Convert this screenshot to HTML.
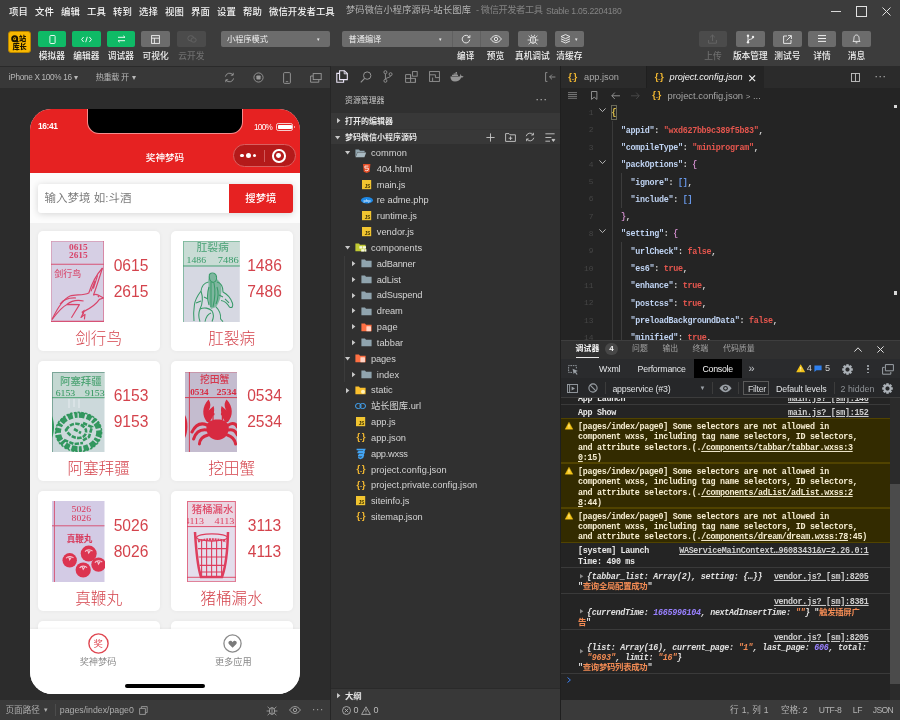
<!DOCTYPE html><html><head><meta charset="utf-8"><title>微信开发者工具</title><style>
*{box-sizing:border-box;margin:0;padding:0}
html,body{width:900px;height:720px;overflow:hidden;background:#2d2d2d}
body{font-family:"Liberation Sans","Noto Sans CJK SC",sans-serif;color:#ddd;position:relative;font-size:9.4px;line-height:1}
.a{position:absolute;white-space:nowrap}
.t{position:absolute;white-space:nowrap;transform:translateY(-50%);line-height:1.2}
.tc{position:absolute;white-space:nowrap;transform:translate(-50%,-50%);line-height:1.2}
.tr{position:absolute;white-space:nowrap;transform:translate(-100%,-50%);line-height:1.2}
.mono{font-family:"Liberation Mono","Noto Sans CJK SC",monospace}
svg{position:absolute;overflow:visible}
</style></head><body><div class="a" style="left:0;top:0;width:900px;height:720px;will-change:transform">
<div class="a" style="left:0px;top:0px;width:900px;height:66px;background:#3c3c3c;"></div>
<div class="t" style="left:9px;top:11.5px;font-size:9.4px;color:#f2f2f2;font-weight:500">项目</div>
<div class="t" style="left:35px;top:11.5px;font-size:9.4px;color:#f2f2f2;font-weight:500">文件</div>
<div class="t" style="left:61px;top:11.5px;font-size:9.4px;color:#f2f2f2;font-weight:500">编辑</div>
<div class="t" style="left:87px;top:11.5px;font-size:9.4px;color:#f2f2f2;font-weight:500">工具</div>
<div class="t" style="left:113px;top:11.5px;font-size:9.4px;color:#f2f2f2;font-weight:500">转到</div>
<div class="t" style="left:139px;top:11.5px;font-size:9.4px;color:#f2f2f2;font-weight:500">选择</div>
<div class="t" style="left:165px;top:11.5px;font-size:9.4px;color:#f2f2f2;font-weight:500">视图</div>
<div class="t" style="left:191px;top:11.5px;font-size:9.4px;color:#f2f2f2;font-weight:500">界面</div>
<div class="t" style="left:217px;top:11.5px;font-size:9.4px;color:#f2f2f2;font-weight:500">设置</div>
<div class="t" style="left:243px;top:11.5px;font-size:9.4px;color:#f2f2f2;font-weight:500">帮助</div>
<div class="t" style="left:269px;top:11.5px;font-size:9.4px;color:#f2f2f2;font-weight:500">微信开发者工具</div>
<div class="t" style="left:346px;top:11px;color:#b4b4b4;font-size:9.2px;letter-spacing:0.179px;">梦码微信小程序源码-站长图库</div>
<div class="t" style="left:476px;top:11px;color:#858585;font-size:9.2px;letter-spacing:-0.382px;">- 微信开发者工具</div>
<div class="t" style="left:546px;top:11px;color:#858585;font-size:8.6px;letter-spacing:-0.201px;">Stable 1.05.2204180</div>
<div class="a" style="left:830.5px;top:10.5px;width:10px;height:1px;background:#d8d8d8;"></div>
<div class="a" style="left:855.5px;top:5.5px;width:11px;height:11px;background:transparent;border:1px solid #e0e0e0"></div>
<svg style="left:882px;top:6.5px" width="9" height="9" viewBox="0 0 9 9"><path d="M0.5 0.5L8.5 8.5M8.5 0.5L0.5 8.5" stroke="#e0e0e0" stroke-width="1" fill="none"/></svg>
<div class="a" style="left:8.4px;top:30.6px;width:22.2px;height:22.2px;background:#f8b800;border-radius:3px;border:0.8px solid #b98600"></div>
<svg style="left:10.8px;top:35px" width="8" height="8" viewBox="0 0 8 8"><circle cx="3.7" cy="3.7" r="2.5" fill="none" stroke="#1a1400" stroke-width="2"/><circle cx="3.7" cy="3.7" r="0.7" fill="#1a1400"/><path d="M5.4 5.4L7.4 7.2" stroke="#1a1400" stroke-width="1.6"/></svg>
<div class="tc" style="left:22.6px;top:38.9px;font-size:7.2px;font-weight:900;color:#1a1400">站</div>
<div class="tc" style="left:19.6px;top:46.6px;font-size:7.2px;font-weight:900;color:#1a1400;letter-spacing:-0.2px">库长</div>
<div class="a" style="left:37.5px;top:31px;width:28.7px;height:15.7px;background:#0fba66;border-radius:2px"></div>
<svg style="left:48.5px;top:34.5px" width="7" height="9" viewBox="0 0 7 9"><rect x="0.9" y="0.5" width="5.2" height="8" rx="0.8" fill="none" stroke="#fff" stroke-width="0.9"/></svg>
<div class="tc" style="left:51.85px;top:56.3px;font-size:8.7px;color:#f0f0f0;font-weight:500">模拟器</div>
<div class="a" style="left:72px;top:31px;width:28.7px;height:15.7px;background:#0fba66;border-radius:2px"></div>
<svg style="left:81px;top:35.5px" width="11" height="7" viewBox="0 0 11 7"><path d="M2.6 1L0.6 3.5L2.6 6M8.4 1L10.4 3.5L8.4 6M6.3 0.8L4.7 6.2" fill="none" stroke="#fff" stroke-width="0.9"/></svg>
<div class="tc" style="left:86.35px;top:56.3px;font-size:8.7px;color:#f0f0f0;font-weight:500">编辑器</div>
<div class="a" style="left:106.5px;top:31px;width:28.7px;height:15.7px;background:#0fba66;border-radius:2px"></div>
<svg style="left:116.5px;top:35px" width="9" height="8" viewBox="0 0 9 8"><path d="M1 2.3H8M6.3 0.8L8 2.3M8 5.7H1M2.7 7.2L1 5.7" fill="none" stroke="#fff" stroke-width="0.9"/></svg>
<div class="tc" style="left:120.85px;top:56.3px;font-size:8.7px;color:#f0f0f0;font-weight:500">调试器</div>
<div class="a" style="left:141.3px;top:31px;width:28.7px;height:15.7px;background:#6c6c6c;border-radius:2px"></div>
<svg style="left:151px;top:34.5px" width="9" height="9" viewBox="0 0 9 9"><rect x="0.6" y="0.6" width="7.8" height="7.8" fill="none" stroke="#f0f0f0" stroke-width="0.9"/><path d="M0.6 3.2H8.4M3.4 3.2V8.4" stroke="#f0f0f0" stroke-width="0.9" fill="none"/></svg>
<div class="tc" style="left:155.65px;top:56.3px;font-size:8.7px;color:#f0f0f0;font-weight:500">可视化</div>
<div class="a" style="left:177px;top:31px;width:28.7px;height:15.7px;background:#4b4b4b;border-radius:2px"></div>
<svg style="left:186.5px;top:35px" width="10" height="8" viewBox="0 0 10 8"><ellipse cx="3.8" cy="3.3" rx="3" ry="2.6" fill="none" stroke="#636363" stroke-width="0.9"/><ellipse cx="6.6" cy="5" rx="2.6" ry="2.2" fill="#4b4b4b" stroke="#636363" stroke-width="0.9"/></svg>
<div class="tc" style="left:191.35px;top:56.3px;font-size:8.7px;color:#6e6e6e;font-weight:500">云开发</div>
<div class="a" style="left:220.5px;top:31px;width:109px;height:15.7px;background:#6c6c6c;border-radius:2px"></div>
<div class="t" style="left:227px;top:39.8px;font-size:8.2px;color:#f0f0f0">小程序模式</div>
<div class="tc" style="left:318px;top:39px;font-size:5.4px;color:#e8e8e8">▾</div>
<div class="a" style="left:342px;top:31px;width:166.7px;height:15.7px;background:#6c6c6c;border-radius:2px"></div>
<div class="t" style="left:348.5px;top:39.8px;font-size:8.2px;color:#f0f0f0">普通编译</div>
<div class="tc" style="left:440.5px;top:39px;font-size:5.4px;color:#e8e8e8">▾</div>
<div class="a" style="left:452.3px;top:31px;width:0.8px;height:15.7px;background:#606060;"></div>
<div class="a" style="left:480.3px;top:31px;width:0.8px;height:15.7px;background:#606060;"></div>
<svg style="left:460.7px;top:33.8px" width="10" height="10" viewBox="0 0 10 10"><path d="M8.3 3.2A3.8 3.8 0 1 0 8.8 5.6" fill="none" stroke="#f0f0f0" stroke-width="0.9"/><path d="M8.9 1.2V3.6H6.5" fill="none" stroke="#f0f0f0" stroke-width="0.9"/></svg>
<svg style="left:489.5px;top:35px" width="12" height="8" viewBox="0 0 12 8"><path d="M0.6 4C2.4 1.4 4.2 0.6 6 0.6S9.6 1.4 11.4 4C9.6 6.6 7.8 7.4 6 7.4S2.4 6.6 0.6 4Z" fill="none" stroke="#f0f0f0" stroke-width="0.9"/><circle cx="6" cy="4" r="1.7" fill="none" stroke="#f0f0f0" stroke-width="0.9"/></svg>
<div class="tc" style="left:465.7px;top:56.3px;font-size:8.7px;color:#f0f0f0;font-weight:500">编译</div>
<div class="tc" style="left:495.5px;top:56.3px;font-size:8.7px;color:#f0f0f0;font-weight:500">预览</div>
<div class="a" style="left:518px;top:31px;width:28.7px;height:15.7px;background:#6c6c6c;border-radius:2px"></div>
<svg style="left:526.5px;top:33.6px" width="12" height="11" viewBox="0 0 12 11"><ellipse cx="6" cy="6" rx="2.6" ry="3.4" fill="none" stroke="#f0f0f0" stroke-width="0.9"/><path d="M6 2.6V9.4M3.4 6H0.6M8.6 6H11.4M3.8 3.8L1.6 1.8M8.2 3.8L10.4 1.8M3.8 8.2L1.6 10.2M8.2 8.2L10.4 10.2M4.4 2.2L4.4 0.8M7.6 2.2V0.8" stroke="#f0f0f0" stroke-width="0.8" fill="none"/></svg>
<div class="tc" style="left:532.35px;top:56.3px;font-size:8.7px;color:#f0f0f0;font-weight:500">真机调试</div>
<div class="a" style="left:555px;top:31px;width:28.7px;height:15.7px;background:#6c6c6c;border-radius:2px"></div>
<svg style="left:560px;top:34px" width="11" height="10" viewBox="0 0 11 10"><path d="M5.5 0.6L10 2.6L5.5 4.6L1 2.6Z M1 4.8L5.5 6.8L10 4.8M1 7L5.5 9L10 7" fill="none" stroke="#f0f0f0" stroke-width="0.9"/></svg>
<div class="tc" style="left:569.35px;top:56.3px;font-size:8.7px;color:#f0f0f0;font-weight:500">清缓存</div>
<div class="tc" style="left:576.5px;top:39px;font-size:5.4px;color:#e8e8e8">▾</div>
<div class="a" style="left:698.6px;top:31px;width:28.6px;height:15.7px;background:#4b4b4b;border-radius:2px"></div>
<svg style="left:708.4px;top:34px" width="9" height="10" viewBox="0 0 9 10"><path d="M4.5 7V1M2.2 3.2L4.5 1L6.8 3.2M0.6 6V9.2H8.4V6" fill="none" stroke="#666" stroke-width="0.9"/></svg>
<div class="tc" style="left:712.9px;top:56.3px;font-size:8.7px;color:#6e6e6e;font-weight:500">上传</div>
<div class="a" style="left:736px;top:31px;width:28.6px;height:15.7px;background:#6c6c6c;border-radius:2px"></div>
<svg style="left:746px;top:34px" width="9" height="10" viewBox="0 0 9 10"><circle cx="2" cy="1.8" r="1.2" fill="#f0f0f0"/><circle cx="2" cy="8.2" r="1.2" fill="#f0f0f0"/><circle cx="7" cy="3" r="1.2" fill="#f0f0f0"/><path d="M2 2V8M7 3.4C7 5.6 2 5 2 7" fill="none" stroke="#f0f0f0" stroke-width="0.9"/></svg>
<div class="tc" style="left:750.3px;top:56.3px;font-size:8.7px;color:#f0f0f0;font-weight:500">版本管理</div>
<div class="a" style="left:773px;top:31px;width:28.8px;height:15.7px;background:#6c6c6c;border-radius:2px"></div>
<svg style="left:783px;top:34.5px" width="9" height="9" viewBox="0 0 9 9"><path d="M4 1H0.6V8.4H8V5M5 0.6H8.4V4M8.2 0.8L3.6 5.4" fill="none" stroke="#f0f0f0" stroke-width="0.9"/></svg>
<div class="tc" style="left:787.4px;top:56.3px;font-size:8.7px;color:#f0f0f0;font-weight:500">测试号</div>
<div class="a" style="left:807.8px;top:31px;width:28.4px;height:15.7px;background:#6c6c6c;border-radius:2px"></div>
<svg style="left:818px;top:35.3px" width="8" height="7" viewBox="0 0 8 7"><path d="M0 0.6H8M0 3.5H8M0 6.4H8" stroke="#f0f0f0" stroke-width="1" fill="none"/></svg>
<div class="tc" style="left:822.0px;top:56.3px;font-size:8.7px;color:#f0f0f0;font-weight:500">详情</div>
<div class="a" style="left:842px;top:31px;width:28.8px;height:15.7px;background:#6c6c6c;border-radius:2px"></div>
<svg style="left:852px;top:34px" width="9" height="10" viewBox="0 0 9 10"><path d="M1 7.4C2 6.4 1.8 5 2 3.6C2.2 2 3.2 1 4.5 1S6.8 2 7 3.6C7.2 5 7 6.4 8 7.4Z M3.6 8.8H5.4" fill="none" stroke="#f0f0f0" stroke-width="0.9"/></svg>
<div class="tc" style="left:856.4px;top:56.3px;font-size:8.7px;color:#f0f0f0;font-weight:500">消息</div>
<div class="a" style="left:0px;top:66px;width:330px;height:22px;background:#383838;border-top:1px solid #2a2a2a"></div>
<div class="t" style="left:8.75px;top:78.2px;color:#b8b8b8;font-size:8.2px;letter-spacing:-0.302px;">iPhone X 100% 16</div>
<div class="tc" style="left:75.5px;top:78px;font-size:8px;color:#b8b8b8">▾</div>
<div class="t" style="left:95.75px;top:78.2px;color:#b8b8b8;font-size:8.2px;letter-spacing:-0.406px;">热重载 开</div>
<div class="tc" style="left:133.75px;top:78px;font-size:8px;color:#b8b8b8">▾</div>
<svg style="left:223.5px;top:72px" width="11" height="11" viewBox="0 0 11 11"><path d="M1.4 4.6A4.2 4.2 0 0 1 9 3M9.6 6.4A4.2 4.2 0 0 1 2 8" fill="none" stroke="#9a9a9a" stroke-width="0.9"/><path d="M9.2 0.8V3.2H6.8M1.8 10.2V7.8H4.2" fill="none" stroke="#9a9a9a" stroke-width="0.9"/></svg>
<svg style="left:252.5px;top:72px" width="11" height="11" viewBox="0 0 11 11"><circle cx="5.5" cy="5.5" r="4.6" fill="none" stroke="#9a9a9a" stroke-width="0.9"/><rect x="3.4" y="3.4" width="4.2" height="4.2" rx="0.8" fill="#9a9a9a"/></svg>
<svg style="left:283px;top:71.5px" width="8" height="12" viewBox="0 0 8 12"><rect x="0.6" y="0.6" width="6.8" height="10.8" rx="1" fill="none" stroke="#9a9a9a" stroke-width="0.9"/><path d="M2.8 9.6H5.2" stroke="#9a9a9a" stroke-width="0.8"/></svg>
<svg style="left:310px;top:72.5px" width="12" height="10" viewBox="0 0 12 10"><rect x="3.2" y="0.6" width="8" height="6" fill="none" stroke="#9a9a9a" stroke-width="0.9"/><path d="M3 3H0.6V9.2H8.8V6.8" fill="none" stroke="#9a9a9a" stroke-width="0.9"/></svg>
<div class="a" style="left:0px;top:88px;width:330px;height:612px;background:#2c2c2c;"></div>
<div class="a" style="left:30px;top:108.5px;width:270px;height:585.5px;background:#f1f1f1;border-radius:21px 21px 22px 22px;overflow:hidden">
<div class="a" style="left:0px;top:0.0px;width:270px;height:64.5px;background:#e62222;"></div>
<div class="a" style="left:58px;top:-8.5px;width:153.5px;height:33px;background:#000;border-radius:0 0 11px 11px;box-shadow:0 0 0 1px rgba(255,205,205,.62)"></div>
<div class="t" style="left:8px;top:17.1px;font-weight:700;color:#fff;font-size:8.4px;letter-spacing:-0.404px;">16:41</div>
<div class="t" style="left:224px;top:19.0px;color:#fff;font-size:8.2px;letter-spacing:-0.738px;">100%</div>
<div class="a" style="left:246px;top:14.7px;width:17.4px;height:7.6px;background:transparent;border:1px solid #f5cdcd;border-radius:2.2px"></div>
<div class="a" style="left:247.7px;top:16.4px;width:14px;height:4.2px;background:#fff;border-radius:0.8px"></div>
<div class="a" style="left:263.8px;top:17.1px;width:1.3px;height:2.8px;background:#f5cdcd;border-radius:0 1px 1px 0"></div>
<div class="tc" style="left:135px;top:49.7px;font-size:9.6px;color:#fff;font-weight:500">奖神梦码</div>
<div class="a" style="left:203px;top:35.9px;width:62.5px;height:22.8px;background:#b41a1a;border-radius:11.4px;border:0.8px solid #d96060"></div>
<div class="a" style="left:234px;top:41.1px;width:0.7px;height:12.4px;background:#d05a5a;"></div>
<div class="a" style="left:210.45px;top:45.75px;width:3.1px;height:3.1px;background:#fff;border-radius:50%"></div>
<div class="a" style="left:215.9px;top:44.8px;width:5.0px;height:5.0px;background:#fff;border-radius:50%"></div>
<div class="a" style="left:223.25px;top:45.75px;width:3.1px;height:3.1px;background:#fff;border-radius:50%"></div>
<div class="a" style="left:242px;top:40.5px;width:13.6px;height:13.6px;background:transparent;border:2px solid #fff;border-radius:50%"></div>
<div class="a" style="left:246.4px;top:44.9px;width:4.8px;height:4.8px;background:#fff;border-radius:50%"></div>
<div class="a" style="left:0px;top:64.5px;width:270px;height:50.4px;background:#fcfcfc;"></div>
<div class="a" style="left:8px;top:75.5px;width:255px;height:28.5px;background:#fff;border-radius:3px;box-shadow:0 1px 7px rgba(0,0,0,.16)"></div>
<div class="a" style="left:198.6px;top:75.5px;width:64.4px;height:28.5px;background:#e62222;border-radius:0 3px 3px 0"></div>
<div class="t" style="left:14.6px;top:90.5px;font-size:11.5px;color:#7d7d7d">输入梦境 如:斗酒</div>
<div class="tc" style="left:230.8px;top:90.5px;font-size:10.3px;color:#fff;font-weight:500">搜梦境</div>
<div class="a" style="left:7.6px;top:122.5px;width:122.6px;height:120px;background:#fff;border-radius:5px;box-shadow:0 0 4px rgba(0,0,0,.05)"></div>
<svg style="left:20.7px;top:132.5px;overflow:hidden" width="53.8" height="81.4" viewBox="0 0 53.8 81.4"><rect width="53.8" height="81.4" fill="#d6cfe4"/><path d="M0 23.2H53.8M53 0V81.4M0 80.4H53.8" stroke="#d8456a" stroke-width="1.1" opacity=".9"/><path d="M0.4 0V81.4M0 0.4H53.8" stroke="#d8456a" stroke-width="0.7" opacity=".45"/><text x="18" y="8.9" font-size="7.6" font-weight="700" fill="#d8456a" text-anchor="start" style="font-family:&quot;Liberation Serif&quot;,&quot;Noto Serif CJK SC&quot;,serif" textLength="18.7" lengthAdjust="spacingAndGlyphs">0615</text><text x="18" y="16.6" font-size="7.6" font-weight="700" fill="#d8456a" text-anchor="start" style="font-family:&quot;Liberation Serif&quot;,&quot;Noto Serif CJK SC&quot;,serif" textLength="18.7" lengthAdjust="spacingAndGlyphs">2615</text><text x="3.2" y="35.6" font-size="9" font-weight="500" fill="#d8456a" text-anchor="start" style="font-family:&quot;Liberation Sans&quot;,&quot;Noto Sans CJK SC&quot;,sans-serif" opacity=".9">剑行鸟</text><g fill="none" stroke="#d8456a" stroke-width="1.15" stroke-linejoin="round"><path d="M51.5 27C46 33 41 42 37.8 52C32 55 24 53 19 55C12 58 6 68 1 78.5"/><path d="M51.5 27C48.5 36 45.5 46 42.5 54C44.5 52.6 47 53.6 49 55L52.5 57L48.4 58.4C46 62 40 67 33 70.4L30 76.5L34 73.4L33.4 78.4"/><path d="M1 78.5C6 72 10 66.4 16 63.4L28.4 63.6L20.4 76.8"/><path d="M16 63.4C20 60 26 58.6 32.6 60M46.6 34.4L42.4 47.6M44 40L40 50.4M9 63C13 58 19 56.6 25 57"/></g><circle cx="47.4" cy="55.6" r="0.8" fill="#d8456a"/><path d="M30.4 71L33.6 68.6L32.6 74Z" fill="#d8456a"/></svg>
<div class="tc" style="left:101px;top:157.8px;font-size:15.6px;color:#d4434c">0615</div>
<div class="tc" style="left:101px;top:183.5px;font-size:15.6px;color:#d4434c">2615</div>
<div class="tc" style="left:68.6px;top:230.4px;font-size:15.6px;color:#d4434c;font-weight:300">剑行鸟</div>
<div class="a" style="left:140.6px;top:122.5px;width:122.6px;height:120px;background:#fff;border-radius:5px;box-shadow:0 0 4px rgba(0,0,0,.05)"></div>
<svg style="left:153px;top:132.5px;overflow:hidden" width="56.8" height="81.2" viewBox="0 0 56.8 81.2"><rect width="56.8" height="81.2" fill="#d6d8e2"/><rect width="56.8" height="25" fill="#c9dcd5"/><path d="M0 25H56.8" stroke="#379a68" stroke-width="1.1" opacity=".9"/><path d="M0.5 0V81.2M0 0.4H56.8" stroke="#379a68" stroke-width="0.9" opacity=".55"/><text x="29.6" y="10.2" font-size="10.8" font-weight="500" fill="#379a68" text-anchor="middle" style="font-family:&quot;Liberation Sans&quot;,&quot;Noto Sans CJK SC&quot;,sans-serif" opacity=".72">肛裂病</text><text x="3.6" y="22" font-size="8.4" font-weight="400" fill="#379a68" text-anchor="start" style="font-family:&quot;Liberation Serif&quot;,&quot;Noto Serif CJK SC&quot;,serif" textLength="19.5" lengthAdjust="spacingAndGlyphs">1486</text><text x="34.8" y="22" font-size="8.4" font-weight="400" fill="#379a68" text-anchor="start" style="font-family:&quot;Liberation Serif&quot;,&quot;Noto Serif CJK SC&quot;,serif" textLength="21" lengthAdjust="spacingAndGlyphs">7486</text><path d="M27 33C31 31.6 34 34 33.6 38C37 40 38.6 44 38.4 50C38 57 36 62 33 66L28 68C25 62 24.6 52 25.6 44C25 40 25 36 27 33Z" fill="#379a68" opacity=".55"/><g fill="none" stroke="#379a68" stroke-width="1.05" stroke-linejoin="round"><path d="M26.4 33.4C29 31 33.4 32 33.6 36.4C33.8 39 32 41 30 41.4C27.4 41 25.6 38 26.4 33.4Z"/><path d="M25.4 41C21 42 18.6 45 18 50C15 54 12 58 11.4 64C10.4 70 10.6 76 11 80M18 50C20 56 20 62 17 68C15.4 72 15.6 77 17 80.6"/><path d="M34 41C38 42 40 46 40 51C44 53 47.6 57 49.4 62C50.6 65.6 49 67.6 46.4 66C44 62 41 60 38 59.6"/><path d="M17 68C21 66 26 67 29 70C31 73 30.6 77 29 80.6M33 66C36 69 38 73 37.6 78L40 80.6M22 80.6C23 76 25 73 28 72"/><path d="M28 41V66M31 42C32.6 50 32 58 30 66M26 46C24 52 24 58 26 64M34 46C36 52 35 58 33 63M21 56L25 58M36 54L40 56M13 62L18 60M42 58L46 62"/></g></svg>
<div class="tc" style="left:234.5px;top:157.8px;font-size:15.6px;color:#d4434c">1486</div>
<div class="tc" style="left:234.5px;top:183.5px;font-size:15.6px;color:#d4434c">7486</div>
<div class="tc" style="left:201.6px;top:230.4px;font-size:15.6px;color:#d4434c;font-weight:300">肛裂病</div>
<div class="a" style="left:7.6px;top:252.5px;width:122.6px;height:120px;background:#fff;border-radius:5px;box-shadow:0 0 4px rgba(0,0,0,.05)"></div>
<svg style="left:22.3px;top:263.2px;overflow:hidden" width="52.5" height="80" viewBox="0 0 52.5 80"><rect width="52.5" height="80" fill="#ccd9db"/><rect width="52.5" height="25.6" fill="#c4d8d2"/><path d="M0 0.5H52.5M0.5 0V80" stroke="#6a9a8a" stroke-width="1" opacity=".8"/><path d="M0 25.7H52.5" stroke="#2a9458" stroke-width="1" opacity=".8"/><path d="M17 27V36M22 27V35M27 27V36" stroke="#dfe6ea" stroke-width="2" opacity=".7"/><text x="28.8" y="12.8" font-size="10.4" font-weight="500" fill="#2a9458" text-anchor="middle" style="font-family:&quot;Liberation Sans&quot;,&quot;Noto Sans CJK SC&quot;,sans-serif" opacity=".75">阿塞拜疆</text><text x="3.7" y="23.5" font-size="8.4" font-weight="400" fill="#2a9458" text-anchor="start" style="font-family:&quot;Liberation Serif&quot;,&quot;Noto Serif CJK SC&quot;,serif" textLength="19.5" lengthAdjust="spacingAndGlyphs">6153</text><text x="33" y="23.5" font-size="8.4" font-weight="400" fill="#2a9458" text-anchor="start" style="font-family:&quot;Liberation Serif&quot;,&quot;Noto Serif CJK SC&quot;,serif" textLength="19.5" lengthAdjust="spacingAndGlyphs">9153</text><ellipse cx="26.6" cy="60" rx="20.4" ry="17" fill="none" stroke="#2a9458" stroke-width="5.6" stroke-dasharray="5 1.8 3 1.4 6 2" opacity=".95"/><ellipse cx="26.6" cy="60" rx="23" ry="19.6" fill="none" stroke="#2a9458" stroke-width="1.6" stroke-dasharray="2.4 1.4" opacity=".9"/><path d="M14 58C19 50 28 50 33 56C36 60 33 66 27 66C21 66 17 63 14 58ZM22 57L29 61M31 51L40 55L37 65L30 69M12 68L22 72L31 71" fill="none" stroke="#2a9458" stroke-width="2.6" stroke-dasharray="4.4 1.3" opacity=".95"/><path d="M0 44C2.6 50 2.6 60 0 66Z" fill="#2a9458"/></svg>
<div class="tc" style="left:101px;top:287.8px;font-size:15.6px;color:#d4434c">6153</div>
<div class="tc" style="left:101px;top:313.5px;font-size:15.6px;color:#d4434c">9153</div>
<div class="tc" style="left:68.6px;top:360.4px;font-size:15.6px;color:#d4434c;font-weight:300">阿塞拜疆</div>
<div class="a" style="left:140.6px;top:252.5px;width:122.6px;height:120px;background:#fff;border-radius:5px;box-shadow:0 0 4px rgba(0,0,0,.05)"></div>
<svg style="left:155.1px;top:263.2px;overflow:hidden" width="52.3" height="80" viewBox="0 0 52.3 80"><rect width="52.3" height="80" fill="#c4bccf"/><path d="M0 25.6H52.3M4.4 0V80" stroke="#d72a40" stroke-width="1" opacity=".85"/><path d="M0 0.4H52.3" stroke="#d72a40" stroke-width="0.7" opacity=".4"/><text x="29.6" y="10.6" font-size="9.8" font-weight="500" fill="#d72a40" text-anchor="middle" style="font-family:&quot;Liberation Sans&quot;,&quot;Noto Sans CJK SC&quot;,sans-serif" opacity=".9">挖田蟹</text><text x="5.3" y="22.6" font-size="8.2" font-weight="700" fill="#d72a40" text-anchor="start" style="font-family:&quot;Liberation Serif&quot;,&quot;Noto Serif CJK SC&quot;,serif" textLength="18.3" lengthAdjust="spacingAndGlyphs">0534</text><text x="31.5" y="22.6" font-size="8.2" font-weight="700" fill="#d72a40" text-anchor="start" style="font-family:&quot;Liberation Serif&quot;,&quot;Noto Serif CJK SC&quot;,serif" textLength="20" lengthAdjust="spacingAndGlyphs">2534</text><path d="M21.4 56C21 50 26 47.4 32.6 47.4C39 47.4 44 50 43.8 56C43.6 63 39 68 32.6 68C26 68 21.6 63 21.4 56Z" fill="#d72a40"/><path d="M22 50C17 44 16.6 35 23.6 27.6C26 31 26 35 23.6 38.6L28.6 34C30.6 40 27 47 24.6 50Z M43 50C48 44 48.6 35 41.6 27.6C39 31 39 35 41.6 38.6L36.6 34C34.6 40 38 47 40.4 50Z" fill="#d72a40"/><path d="M22 53C15 50 10 54 7 60M21.6 58C14 57 10.4 61.6 8.6 67M23 63C17 64.6 14.6 68 14.4 72M43.4 53C48 50 51 52 52.3 55M43.6 58C48 57 51 60 52.3 63M42.4 63C47 64.6 50 68 50.6 72" fill="none" stroke="#d72a40" stroke-width="3" stroke-linecap="round"/><path d="M28 48.4V42.6M37.4 48.4V42.6" stroke="#d72a40" stroke-width="1.3"/><circle cx="28" cy="42" r="1.6" fill="#d72a40"/><circle cx="37.4" cy="42" r="1.6" fill="#d72a40"/><path d="M0 43C3.2 48 3.2 60 0 66Z" fill="#d72a40"/></svg>
<div class="tc" style="left:234.5px;top:287.8px;font-size:15.6px;color:#d4434c">0534</div>
<div class="tc" style="left:234.5px;top:313.5px;font-size:15.6px;color:#d4434c">2534</div>
<div class="tc" style="left:201.6px;top:360.4px;font-size:15.6px;color:#d4434c;font-weight:300">挖田蟹</div>
<div class="a" style="left:7.6px;top:382.5px;width:122.6px;height:120px;background:#fff;border-radius:5px;box-shadow:0 0 4px rgba(0,0,0,.05)"></div>
<svg style="left:22.3px;top:392.5px;overflow:hidden" width="52.5" height="81.3" viewBox="0 0 52.5 81.3"><rect width="52.5" height="81.3" fill="#d3cbe5"/><path d="M0 24.8H52.5M2.4 0V81.3" stroke="#d8385a" stroke-width="1" opacity=".8"/><text x="19.6" y="11" font-size="7.8" font-weight="500" fill="#d8385a" text-anchor="start" style="font-family:&quot;Liberation Serif&quot;,&quot;Noto Serif CJK SC&quot;,serif" textLength="19.4" lengthAdjust="spacingAndGlyphs">5026</text><text x="19.6" y="19.6" font-size="7.8" font-weight="500" fill="#d8385a" text-anchor="start" style="font-family:&quot;Liberation Serif&quot;,&quot;Noto Serif CJK SC&quot;,serif" textLength="19.4" lengthAdjust="spacingAndGlyphs">8026</text><text x="27.5" y="41" font-size="8.6" font-weight="700" fill="#d8385a" text-anchor="middle" style="font-family:&quot;Liberation Sans&quot;,&quot;Noto Sans CJK SC&quot;,sans-serif" >真鞭丸</text><circle cx="17.7" cy="59.3" r="7.2" fill="#dc3450"/><path d="M14.1 57.3C15.7 54.9 19.7 54.9 21.5 56.9M16.7 55.9L17.7 58.699999999999996L19.3 56.3" stroke="#f4c9d6" stroke-width="1.1" fill="none"/><circle cx="36.7" cy="52.6" r="8" fill="#dc3450"/><path d="M33.1 50.6C34.7 48.2 38.7 48.2 40.5 50.2M35.7 49.2L36.7 52.0L38.300000000000004 49.6" stroke="#f4c9d6" stroke-width="1.1" fill="none"/><circle cx="46.5" cy="63.6" r="7.2" fill="#dc3450"/><path d="M42.9 61.6C44.5 59.2 48.5 59.2 50.3 61.2M45.5 60.2L46.5 63.0L48.1 60.6" stroke="#f4c9d6" stroke-width="1.1" fill="none"/><circle cx="31.2" cy="69" r="7.6" fill="#dc3450"/><path d="M27.599999999999998 67C29.2 64.6 33.2 64.6 35.0 66.6M30.2 65.6L31.2 68.4L32.8 66" stroke="#f4c9d6" stroke-width="1.1" fill="none"/></svg>
<div class="tc" style="left:101px;top:417.8px;font-size:15.6px;color:#d4434c">5026</div>
<div class="tc" style="left:101px;top:443.5px;font-size:15.6px;color:#d4434c">8026</div>
<div class="tc" style="left:68.6px;top:490.4px;font-size:15.6px;color:#d4434c;font-weight:300">真鞭丸</div>
<div class="a" style="left:140.6px;top:382.5px;width:122.6px;height:120px;background:#fff;border-radius:5px;box-shadow:0 0 4px rgba(0,0,0,.05)"></div>
<svg style="left:156.7px;top:392.5px;overflow:hidden" width="48.9" height="81.2" viewBox="0 0 48.9 81.2"><rect width="48.9" height="81.2" fill="#e4deec"/><rect width="48.9" height="25.6" fill="#ead6e2"/><rect x="0.5" y="0.5" width="47.9" height="80.2" fill="none" stroke="#de3e5e" stroke-width="1" opacity=".7"/><path d="M0 25.6H48.9M0 76.3H48.9" stroke="#de3e5e" stroke-width="1" opacity=".9"/><text x="25.6" y="12.2" font-size="10.4" font-weight="500" fill="#de3e5e" text-anchor="middle" style="font-family:&quot;Liberation Sans&quot;,&quot;Noto Sans CJK SC&quot;,sans-serif" opacity=".9">猪桶漏水</text><text x="-2.6" y="22.8" font-size="8.4" font-weight="400" fill="#de3e5e" text-anchor="start" style="font-family:&quot;Liberation Serif&quot;,&quot;Noto Serif CJK SC&quot;,serif" textLength="19.6" lengthAdjust="spacingAndGlyphs">4113</text><text x="27.5" y="22.8" font-size="8.4" font-weight="400" fill="#de3e5e" text-anchor="start" style="font-family:&quot;Liberation Serif&quot;,&quot;Noto Serif CJK SC&quot;,serif" textLength="20" lengthAdjust="spacingAndGlyphs">4113</text><path d="M8 31C9 48 10 64 14 76H35C39.4 64 40.6 48 41 31" fill="none" stroke="#de3e5e" stroke-width="2.5"/><ellipse cx="25" cy="36.4" rx="15.4" ry="3.6" fill="none" stroke="#de3e5e" stroke-width="1.3"/><path d="M11 40.4C19 37.6 31 37.6 39 40.4" fill="none" stroke="#de3e5e" stroke-width="2.2" stroke-dasharray="2 0.8"/><path d="M14.6 40V76M19.6 40V76M24.6 40V76M29.6 40V76M34.6 40V76M11 47.6H39M11.6 56H38.4M12.6 64.4H37.4M13.4 71H36.6" stroke="#de3e5e" stroke-width="1.1" fill="none"/></svg>
<div class="tc" style="left:234.5px;top:417.8px;font-size:15.6px;color:#d4434c">3113</div>
<div class="tc" style="left:234.5px;top:443.5px;font-size:15.6px;color:#d4434c">4113</div>
<div class="tc" style="left:201.6px;top:490.4px;font-size:15.6px;color:#d4434c;font-weight:300">猪桶漏水</div>
<div class="a" style="left:7.6px;top:512.5px;width:122.6px;height:120px;background:#fff;border-radius:5px;box-shadow:0 0 4px rgba(0,0,0,.05)"></div>
<div class="a" style="left:140.6px;top:512.5px;width:122.6px;height:120px;background:#fff;border-radius:5px;box-shadow:0 0 4px rgba(0,0,0,.05)"></div>
<div class="a" style="left:0px;top:520.5px;width:270px;height:70px;background:#fff;box-shadow:0 -1px 2px rgba(0,0,0,.04)"></div>
<svg style="left:57.599999999999994px;top:524.5px" width="21" height="21" viewBox="0 0 21 21"><circle cx="10.5" cy="10.5" r="9.6" fill="none" stroke="#df4650" stroke-width="1.4"/></svg>
<div class="tc" style="left:68.1px;top:535.7px;font-size:9.4px;color:#df4650;font-weight:400">奖</div>
<div class="tc" style="left:68px;top:554.6px;font-size:9.2px;color:#8a8a8a">奖神梦码</div>
<svg style="left:193.3px;top:525.8px" width="19" height="19" viewBox="0 0 19 19"><circle cx="9.5" cy="9.5" r="8.6" fill="none" stroke="#8a8a8a" stroke-width="1.3"/></svg>
<svg style="left:198.2px;top:531.5px" width="9.2" height="8.2" viewBox="0 0 11 10"><path d="M5.5 9.4L1.2 5.2C-0.3 3.6 0.3 0.8 2.8 0.8C4.2 0.8 5.1 1.6 5.5 2.6C5.9 1.6 6.8 0.8 8.2 0.8C10.7 0.8 11.3 3.6 9.8 5.2Z" fill="#7a7a7a"/></svg>
<div class="tc" style="left:203.3px;top:554.6px;font-size:9.2px;color:#8a8a8a">更多应用</div>
<div class="a" style="left:95.4px;top:575.7px;width:79.4px;height:3.6px;background:#000;border-radius:2px"></div>
</div>
<div class="a" style="left:0px;top:700px;width:330px;height:20px;background:#3a3a3a;"></div>
<div class="t" style="left:5.5px;top:710px;font-size:8.6px;color:#adadad">页面路径</div>
<div class="tc" style="left:45.8px;top:710.3px;font-size:7px;color:#adadad">▾</div>
<div class="a" style="left:54.5px;top:704px;width:0.8px;height:12px;background:#4c4c4c;"></div>
<div class="t" style="left:59.8px;top:710px;color:#adadad;font-size:8.8px;letter-spacing:-0.021px;">pages/index/page0</div>
<svg style="left:138.5px;top:705.5px" width="9" height="9" viewBox="0 0 9 9"><path d="M2.4 2.2V0.6H8.2V6.6H6.6M0.6 2.4H6.4V8.4H0.6Z" fill="none" stroke="#9c9c9c" stroke-width="0.9"/></svg>
<svg style="left:266px;top:704.5px" width="12" height="11" viewBox="0 0 12 11"><ellipse cx="6" cy="6" rx="2.6" ry="3.4" fill="none" stroke="#a8a8a8" stroke-width="0.9"/><path d="M6 2.6V9.4M3.4 6H0.6M8.6 6H11.4M3.8 3.8L1.6 1.8M8.2 3.8L10.4 1.8M3.8 8.2L1.6 10.2M8.2 8.2L10.4 10.2" stroke="#a8a8a8" stroke-width="0.8" fill="none"/></svg>
<svg style="left:289px;top:706px" width="12" height="8" viewBox="0 0 12 8"><path d="M0.6 4C2.4 1.4 4.2 0.6 6 0.6S9.6 1.4 11.4 4C9.6 6.6 7.8 7.4 6 7.4S2.4 6.6 0.6 4Z" fill="none" stroke="#a8a8a8" stroke-width="0.9"/><circle cx="6" cy="4" r="1.7" fill="none" stroke="#a8a8a8" stroke-width="0.9"/></svg>
<div class="tc" style="left:318px;top:709.5px;font-size:10px;color:#a8a8a8;letter-spacing:0.6px">···</div>
<div class="a" style="left:330px;top:66px;width:230px;height:22px;background:#303030;"></div>
<div class="a" style="left:330px;top:88px;width:230px;height:600px;background:#303030;"></div>
<div class="a" style="left:330px;top:66px;width:0.8px;height:654px;background:#262626;"></div>
<svg style="left:336px;top:70px" width="12" height="13" viewBox="0 0 12 13"><path d="M3.6 9.6V0.7H8.4L11.3 3.6V9.6Z" fill="none" stroke="#ece6f7" stroke-width="1.1"/><path d="M8.2 0.8V3.8H11.2" fill="none" stroke="#ece6f7" stroke-width="0.9"/><path d="M3.4 3.4H0.8V12.3H7.6V9.8" fill="none" stroke="#ece6f7" stroke-width="1.1"/></svg>
<svg style="left:360px;top:70.5px" width="12" height="12" viewBox="0 0 12 12"><circle cx="7.2" cy="4.6" r="3.7" fill="none" stroke="#959595" stroke-width="1"/><path d="M4.6 7.4L0.8 11.4" stroke="#959595" stroke-width="1.1"/></svg>
<svg style="left:383.4px;top:70px" width="10" height="13" viewBox="0 0 10 13"><circle cx="2.4" cy="2.2" r="1.5" fill="none" stroke="#959595" stroke-width="0.9"/><circle cx="2.4" cy="10.8" r="1.5" fill="none" stroke="#959595" stroke-width="0.9"/><circle cx="7.6" cy="4.2" r="1.5" fill="none" stroke="#959595" stroke-width="0.9"/><path d="M2.4 3.8V9.2M7.6 5.8C7.6 8 2.6 7.4 2.4 9.2" fill="none" stroke="#959595" stroke-width="0.9"/></svg>
<svg style="left:404.6px;top:70.5px" width="13" height="12" viewBox="0 0 13 12"><path d="M0.6 3.6H5.6V11.4H0.6ZM0.6 7.4H10.4V11.4H5.6M5.6 7.4V3.6M10.4 7.4V11.4" fill="none" stroke="#959595" stroke-width="0.9"/><rect x="7.6" y="0.6" width="4.6" height="4.6" fill="none" stroke="#959595" stroke-width="0.9"/></svg>
<svg style="left:429px;top:71px" width="11" height="11" viewBox="0 0 11 11"><rect x="0.6" y="0.6" width="9.8" height="9.8" fill="none" stroke="#959595" stroke-width="0.9"/><path d="M0.6 3.8H6.4V6.6H10.4M3.6 10.4V6.6" fill="none" stroke="#959595" stroke-width="0.9"/></svg>
<svg style="left:449.7px;top:71.5px" width="14" height="10" viewBox="0 0 14 10"><path d="M0.4 4.6H9.6C10.2 4.2 10.4 3.2 10 2.2C11 2.6 11.4 3.4 11.4 4C12.2 3.8 13 4 13.6 4.4C13 5.4 12 5.6 11.2 5.6C10.2 8.2 8 9.6 5 9.6C2 9.6 0.4 7.6 0.4 4.6Z" fill="#959595"/><path d="M2 3.4H8M3.6 2H7.2M5.6 0.7H7" stroke="#959595" stroke-width="1.2"/></svg>
<svg style="left:544.5px;top:72px" width="11" height="10" viewBox="0 0 11 10"><path d="M2.4 0.6H0.6V9.4H2.4M4.6 5H10.4M7 2.6L4.6 5L7 7.4" fill="none" stroke="#959595" stroke-width="0.9"/></svg>
<div class="t" style="left:345px;top:101.2px;font-size:7.9px;color:#c8c8c8">资源管理器</div>
<div class="tc" style="left:541.5px;top:100px;font-size:10px;color:#c8c8c8;letter-spacing:0.6px">···</div>
<div class="a" style="left:330.8px;top:113.3px;width:229.2px;height:15.4px;background:#383838;"></div>
<div class="a" style="left:330.8px;top:128.7px;width:229.2px;height:15.8px;background:#383838;border-top:1px solid #343434"></div>
<svg style="left:336.6px;top:118.4px" width="3.4" height="5.2" viewBox="0 0 3.4 5.2"><path d="M0 0V5.2L3.4 2.6Z" fill="#c8c8c8"/></svg>
<div class="t" style="left:345px;top:121.6px;font-size:8px;color:#e4e4e4;font-weight:700">打开的编辑器</div>
<svg style="left:335.4px;top:135.6px" width="5.2" height="3.4" viewBox="0 0 5.2 3.4"><path d="M0 0H5.2L2.6 3.4Z" fill="#c8c8c8"/></svg>
<div class="t" style="left:345px;top:137.6px;font-size:8px;color:#e4e4e4;font-weight:700">梦码微信小程序源码</div>
<svg style="left:485.5px;top:132.5px" width="9" height="9" viewBox="0 0 9 9"><path d="M4.5 0.4V8.6M0.4 4.5H8.6" stroke="#c8c8c8" stroke-width="0.9"/></svg>
<svg style="left:504.5px;top:132.5px" width="11" height="9" viewBox="0 0 11 9"><path d="M0.6 0.6H4L5 1.8H10.4V8.4H0.6Z" fill="none" stroke="#c8c8c8" stroke-width="0.9"/><path d="M5.5 3.4V7M3.7 5.2H7.3" stroke="#c8c8c8" stroke-width="0.9"/></svg>
<svg style="left:525px;top:132px" width="10" height="10" viewBox="0 0 10 10"><path d="M1.2 4.2A3.9 3.9 0 0 1 8.2 2.8M8.8 5.8A3.9 3.9 0 0 1 1.8 7.2" fill="none" stroke="#c8c8c8" stroke-width="0.9"/><path d="M8.4 0.8V3H6.2M1.6 9.2V7H3.8" fill="none" stroke="#c8c8c8" stroke-width="0.9"/></svg>
<svg style="left:545px;top:132.5px" width="10" height="9" viewBox="0 0 10 9"><path d="M0.4 0.8H9.6M0.4 4.5H6.4M0.4 8.2H5M7 6.4H9.8L8.4 8.4Z" stroke="#c8c8c8" stroke-width="0.9" fill="#c8c8c8"/></svg>
<div class="a" style="left:344.4px;top:255.6px;width:0.7px;height:126.6px;background:#3b3b3b;"></div>
<svg style="left:344.7px;top:151.29999999999998px" width="5.2" height="3.4" viewBox="0 0 5.2 3.4"><path d="M0 0H5.2L2.6 3.4Z" fill="#c8c8c8"/></svg>
<svg style="left:355.2px;top:148.5px" width="11.4" height="8.6" viewBox="0 0 11.4 8.6"><path d="M0.4 0.6H4L5 1.8H9.6V3.2H2.4L0.4 8.2Z" fill="#90a4ae"/><path d="M2.6 3.6H11.2L9.4 8.2H0.6Z" fill="#a9bac2"/></svg>
<div class="t" style="left:371.0px;top:154.0px;color:#d4d4d4;font-size:9.3px;letter-spacing:0.041px;">common</div>
<svg style="left:362.8px;top:163.93px" width="7.4" height="9" viewBox="0 0 8.4 9.6" preserveAspectRatio="none"><path d="M0 0H8.4L7.6 8.2L4.2 9.6L0.8 8.2Z" fill="#e44d26"/><path d="M2.2 2.2H6.2M2.2 2.2V4.4H6V6.6L4.2 7.2L2.4 6.6" fill="none" stroke="#fff" stroke-width="0.9"/></svg>
<div class="t" style="left:376.8px;top:169.83px;color:#d4d4d4;font-size:9.3px;letter-spacing:-0.009px;">404.html</div>
<svg style="left:361.9px;top:179.76px" width="9.2" height="9.2" viewBox="0 0 9.2 9.2"><rect width="9.2" height="9.2" fill="#f2c530"/><text x="8.4" y="8.2" font-size="4.6" font-weight="700" fill="#3a3000" text-anchor="end" style="font-family:&quot;Liberation Sans&quot;,sans-serif">JS</text></svg>
<div class="t" style="left:376.8px;top:185.66px;color:#d4d4d4;font-size:9.3px;letter-spacing:-0.150px;">main.js</div>
<svg style="left:360.5px;top:196.99px" width="12" height="6.4" viewBox="0 0 12 6.4"><ellipse cx="6" cy="3.2" rx="6" ry="3.2" fill="#1e88e5"/><text x="6" y="4.7" font-size="3.8" font-weight="700" fill="#cfe6fb" text-anchor="middle" style="font-family:&quot;Liberation Sans&quot;,sans-serif">php</text></svg>
<div class="t" style="left:376.8px;top:201.49px;color:#d4d4d4;font-size:9.3px;letter-spacing:-0.028px;">re adme.php</div>
<svg style="left:361.9px;top:211.42px" width="9.2" height="9.2" viewBox="0 0 9.2 9.2"><rect width="9.2" height="9.2" fill="#f2c530"/><text x="8.4" y="8.2" font-size="4.6" font-weight="700" fill="#3a3000" text-anchor="end" style="font-family:&quot;Liberation Sans&quot;,sans-serif">JS</text></svg>
<div class="t" style="left:376.8px;top:217.32px;color:#d4d4d4;font-size:9.3px;letter-spacing:-0.011px;">runtime.js</div>
<svg style="left:361.9px;top:227.25px" width="9.2" height="9.2" viewBox="0 0 9.2 9.2"><rect width="9.2" height="9.2" fill="#f2c530"/><text x="8.4" y="8.2" font-size="4.6" font-weight="700" fill="#3a3000" text-anchor="end" style="font-family:&quot;Liberation Sans&quot;,sans-serif">JS</text></svg>
<div class="t" style="left:376.8px;top:233.15px;color:#d4d4d4;font-size:9.3px;letter-spacing:-0.013px;">vendor.js</div>
<svg style="left:344.7px;top:246.28px" width="5.2" height="3.4" viewBox="0 0 5.2 3.4"><path d="M0 0H5.2L2.6 3.4Z" fill="#c8c8c8"/></svg>
<svg style="left:355.2px;top:243.48000000000002px" width="11.4" height="8.6" viewBox="0 0 11.4 8.6"><path d="M0.4 0.6H4L5 1.8H10.6V8.2H0.4Z" fill="#c0ca33"/><rect x="4.4" y="3.2" width="3" height="2.4" fill="#f6f8dc"/><rect x="8" y="3.2" width="3" height="2.4" fill="#f6f8dc"/><rect x="6.2" y="6.2" width="3" height="2.4" fill="#f6f8dc"/><rect x="9.6" y="6.2" width="1.8" height="2.4" fill="#f6f8dc"/></svg>
<div class="t" style="left:371.0px;top:248.98000000000002px;color:#d4d4d4;font-size:9.3px;letter-spacing:0.044px;">components</div>
<svg style="left:351.70000000000005px;top:260.90999999999997px" width="3.4" height="5.2" viewBox="0 0 3.4 5.2"><path d="M0 0V5.2L3.4 2.6Z" fill="#c8c8c8"/></svg>
<svg style="left:361.0px;top:259.31px" width="11" height="8.6" viewBox="0 0 11 8.6"><path d="M0.4 0.6H4L5 1.8H10.6V8.2H0.4Z" fill="#90a4ae"/></svg>
<div class="t" style="left:376.8px;top:264.81px;color:#d4d4d4;font-size:9.3px;letter-spacing:-0.216px;">adBanner</div>
<svg style="left:351.70000000000005px;top:276.73999999999995px" width="3.4" height="5.2" viewBox="0 0 3.4 5.2"><path d="M0 0V5.2L3.4 2.6Z" fill="#c8c8c8"/></svg>
<svg style="left:361.0px;top:275.14px" width="11" height="8.6" viewBox="0 0 11 8.6"><path d="M0.4 0.6H4L5 1.8H10.6V8.2H0.4Z" fill="#90a4ae"/></svg>
<div class="t" style="left:376.8px;top:280.64px;color:#d4d4d4;font-size:9.3px;letter-spacing:-0.169px;">adList</div>
<svg style="left:351.70000000000005px;top:292.56999999999994px" width="3.4" height="5.2" viewBox="0 0 3.4 5.2"><path d="M0 0V5.2L3.4 2.6Z" fill="#c8c8c8"/></svg>
<svg style="left:361.0px;top:290.96999999999997px" width="11" height="8.6" viewBox="0 0 11 8.6"><path d="M0.4 0.6H4L5 1.8H10.6V8.2H0.4Z" fill="#90a4ae"/></svg>
<div class="t" style="left:376.8px;top:296.46999999999997px;color:#d4d4d4;font-size:9.3px;letter-spacing:-0.172px;">adSuspend</div>
<svg style="left:351.70000000000005px;top:308.4px" width="3.4" height="5.2" viewBox="0 0 3.4 5.2"><path d="M0 0V5.2L3.4 2.6Z" fill="#c8c8c8"/></svg>
<svg style="left:361.0px;top:306.8px" width="11" height="8.6" viewBox="0 0 11 8.6"><path d="M0.4 0.6H4L5 1.8H10.6V8.2H0.4Z" fill="#90a4ae"/></svg>
<div class="t" style="left:376.8px;top:312.3px;color:#d4d4d4;font-size:9.3px;letter-spacing:-0.072px;">dream</div>
<svg style="left:351.70000000000005px;top:324.22999999999996px" width="3.4" height="5.2" viewBox="0 0 3.4 5.2"><path d="M0 0V5.2L3.4 2.6Z" fill="#c8c8c8"/></svg>
<svg style="left:361.0px;top:322.63px" width="11.4" height="8.6" viewBox="0 0 11.4 8.6"><path d="M0.4 0.6H4L5 1.8H10.6V8.2H0.4Z" fill="#ff7043"/><rect x="5.4" y="3.2" width="4.6" height="5" rx="0.5" fill="#ffd3c4"/></svg>
<div class="t" style="left:376.8px;top:328.13px;color:#d4d4d4;font-size:9.3px;letter-spacing:0.028px;">page</div>
<svg style="left:351.70000000000005px;top:340.05999999999995px" width="3.4" height="5.2" viewBox="0 0 3.4 5.2"><path d="M0 0V5.2L3.4 2.6Z" fill="#c8c8c8"/></svg>
<svg style="left:361.0px;top:338.46px" width="11" height="8.6" viewBox="0 0 11 8.6"><path d="M0.4 0.6H4L5 1.8H10.6V8.2H0.4Z" fill="#90a4ae"/></svg>
<div class="t" style="left:376.8px;top:343.96px;color:#d4d4d4;font-size:9.3px;letter-spacing:0.004px;">tabbar</div>
<svg style="left:344.7px;top:357.09000000000003px" width="5.2" height="3.4" viewBox="0 0 5.2 3.4"><path d="M0 0H5.2L2.6 3.4Z" fill="#c8c8c8"/></svg>
<svg style="left:355.2px;top:354.29px" width="11.4" height="8.6" viewBox="0 0 11.4 8.6"><path d="M0.4 0.6H4L5 1.8H10.6V8.2H0.4Z" fill="#ff7043"/><rect x="5.4" y="3.2" width="4.6" height="5" rx="0.5" fill="#ffd3c4"/></svg>
<div class="t" style="left:371.0px;top:359.79px;color:#d4d4d4;font-size:9.3px;letter-spacing:-0.129px;">pages</div>
<svg style="left:351.70000000000005px;top:371.71999999999997px" width="3.4" height="5.2" viewBox="0 0 3.4 5.2"><path d="M0 0V5.2L3.4 2.6Z" fill="#c8c8c8"/></svg>
<svg style="left:361.0px;top:370.12px" width="11" height="8.6" viewBox="0 0 11 8.6"><path d="M0.4 0.6H4L5 1.8H10.6V8.2H0.4Z" fill="#90a4ae"/></svg>
<div class="t" style="left:376.8px;top:375.62px;color:#d4d4d4;font-size:9.3px;letter-spacing:0.013px;">index</div>
<svg style="left:345.90000000000003px;top:387.54999999999995px" width="3.4" height="5.2" viewBox="0 0 3.4 5.2"><path d="M0 0V5.2L3.4 2.6Z" fill="#c8c8c8"/></svg>
<svg style="left:355.2px;top:385.95px" width="11.4" height="8.6" viewBox="0 0 11.4 8.6"><path d="M0.4 0.6H4L5 1.8H10.6V8.2H0.4Z" fill="#fbc02d"/><circle cx="8" cy="5.8" r="2" fill="#fff0b8"/></svg>
<div class="t" style="left:371.0px;top:391.45px;color:#d4d4d4;font-size:9.3px;letter-spacing:-0.001px;">static</div>
<svg style="left:355.2px;top:402.98px" width="11" height="6" viewBox="0 0 11 6"><rect x="0.5" y="0.5" width="5.6" height="5" rx="2.5" fill="none" stroke="#42a5f5" stroke-width="1"/><rect x="4.9" y="0.5" width="5.6" height="5" rx="2.5" fill="none" stroke="#42a5f5" stroke-width="1"/></svg>
<div class="t" style="left:371.0px;top:407.28000000000003px;color:#d4d4d4;font-size:9.3px;letter-spacing:-0.014px;">站长图库.url</div>
<svg style="left:356.09999999999997px;top:417.21px" width="9.2" height="9.2" viewBox="0 0 9.2 9.2"><rect width="9.2" height="9.2" fill="#f2c530"/><text x="8.4" y="8.2" font-size="4.6" font-weight="700" fill="#3a3000" text-anchor="end" style="font-family:&quot;Liberation Sans&quot;,sans-serif">JS</text></svg>
<div class="t" style="left:371.0px;top:423.11px;color:#d4d4d4;font-size:9.3px;letter-spacing:-0.019px;">app.js</div>
<div class="tc" style="left:360.7px;top:437.24px;font-size:9.6px;color:#f2b831;font-weight:700;letter-spacing:-0.6px">{<span style="font-size:6px;position:relative;top:-0.4px">..</span>}</div>
<div class="t" style="left:371.0px;top:438.94px;color:#d4d4d4;font-size:9.3px;letter-spacing:-0.020px;">app.json</div>
<svg style="left:356.09999999999997px;top:448.66999999999996px" width="9.2" height="9.6" viewBox="0 0 9.2 9.6"><path d="M0.6 0.4H8.6L7.6 2.4H2.2M1.4 3.6H8L7.2 5.6H2.6M2 6.8H7.2L6.6 8.4L4.4 9.4L2.2 8.4" fill="none" stroke="#42a5f5" stroke-width="1.5"/></svg>
<div class="t" style="left:371.0px;top:454.77px;color:#d4d4d4;font-size:9.3px;letter-spacing:-0.258px;">app.wxss</div>
<div class="tc" style="left:360.7px;top:468.90000000000003px;font-size:9.6px;color:#f2b831;font-weight:700;letter-spacing:-0.6px">{<span style="font-size:6px;position:relative;top:-0.4px">..</span>}</div>
<div class="t" style="left:371.0px;top:470.6px;color:#d4d4d4;font-size:9.3px;letter-spacing:0.040px;">project.config.json</div>
<div class="tc" style="left:360.7px;top:484.73px;font-size:9.6px;color:#f2b831;font-weight:700;letter-spacing:-0.6px">{<span style="font-size:6px;position:relative;top:-0.4px">..</span>}</div>
<div class="t" style="left:371.0px;top:486.43px;color:#d4d4d4;font-size:9.3px;letter-spacing:0.033px;">project.private.config.json</div>
<svg style="left:356.09999999999997px;top:496.35999999999996px" width="9.2" height="9.2" viewBox="0 0 9.2 9.2"><rect width="9.2" height="9.2" fill="#f2c530"/><text x="8.4" y="8.2" font-size="4.6" font-weight="700" fill="#3a3000" text-anchor="end" style="font-family:&quot;Liberation Sans&quot;,sans-serif">JS</text></svg>
<div class="t" style="left:371.0px;top:502.26px;color:#d4d4d4;font-size:9.3px;letter-spacing:-0.042px;">siteinfo.js</div>
<div class="tc" style="left:360.7px;top:516.39px;font-size:9.6px;color:#f2b831;font-weight:700;letter-spacing:-0.6px">{<span style="font-size:6px;position:relative;top:-0.4px">..</span>}</div>
<div class="t" style="left:371.0px;top:518.0899999999999px;color:#d4d4d4;font-size:9.3px;letter-spacing:-0.042px;">sitemap.json</div>
<div class="a" style="left:330.8px;top:687.5px;width:229.2px;height:32.5px;background:#383838;border-top:0.8px solid #2a2a2a"></div>
<svg style="left:336.6px;top:693.0px" width="3.4" height="5.2" viewBox="0 0 3.4 5.2"><path d="M0 0V5.2L3.4 2.6Z" fill="#c8c8c8"/></svg>
<div class="t" style="left:345px;top:695.6px;font-size:8.4px;color:#e4e4e4;font-weight:700">大纲</div>
<svg style="left:341.5px;top:705.5px" width="9" height="9" viewBox="0 0 9 9"><circle cx="4.5" cy="4.5" r="4" fill="none" stroke="#bdbdbd" stroke-width="0.8"/><path d="M2.8 2.8L6.2 6.2M6.2 2.8L2.8 6.2" stroke="#bdbdbd" stroke-width="0.8"/></svg>
<div class="t" style="left:353.5px;top:710.3px;font-size:9px;color:#bdbdbd">0</div>
<svg style="left:361px;top:705.5px" width="10" height="9" viewBox="0 0 10 9"><path d="M5 0.8L9.4 8.4H0.6Z" fill="none" stroke="#bdbdbd" stroke-width="0.8"/><path d="M5 3.4V6M5 6.8V7.6" stroke="#bdbdbd" stroke-width="0.8"/></svg>
<div class="t" style="left:373.5px;top:710.3px;font-size:9px;color:#bdbdbd">0</div>
<div class="a" style="left:560px;top:66px;width:340px;height:22px;background:#2b2b2b;"></div>
<div class="a" style="left:560px;top:88px;width:340px;height:252px;background:#242424;"></div>
<div class="a" style="left:560px;top:66px;width:0.8px;height:654px;background:#1f1f1f;"></div>
<div class="a" style="left:646.6px;top:66px;width:117px;height:22px;background:#242424;"></div>
<div class="a" style="left:646.2px;top:66px;width:0.7px;height:22px;background:#1f1f1f;"></div>
<div class="tc" style="left:572.5px;top:77.39999999999999px;font-size:9.6px;color:#f2b831;font-weight:700;letter-spacing:-0.6px">{<span style="font-size:6px;position:relative;top:-0.4px">..</span>}</div>
<div class="t" style="left:584px;top:78.4px;color:#a8a8a8;font-size:9.2px;letter-spacing:0.031px;">app.json</div>
<div class="tc" style="left:659px;top:77.39999999999999px;font-size:9.6px;color:#f2b831;font-weight:700;letter-spacing:-0.6px">{<span style="font-size:6px;position:relative;top:-0.4px">..</span>}</div>
<div class="t" style="left:669.6px;top:78.4px;color:#f2f2f2;font-style:italic;font-size:9.2px;letter-spacing:-0.056px;">project.config.json</div>
<svg style="left:748.6px;top:74.6px" width="6.4" height="6.4" viewBox="0 0 6.4 6.4"><path d="M0.3 0.3L6.1 6.1M6.1 0.3L0.3 6.1" stroke="#f0f0f0" stroke-width="1.2"/></svg>
<svg style="left:850.5px;top:72.5px" width="9" height="9" viewBox="0 0 9 9"><rect x="0.5" y="0.5" width="8" height="8" fill="none" stroke="#c4c4c4" stroke-width="0.9"/><path d="M4.5 0.5V8.5" stroke="#c4c4c4" stroke-width="0.9"/></svg>
<div class="tc" style="left:880.5px;top:76.6px;font-size:10px;color:#c4c4c4;letter-spacing:0.6px">···</div>
<svg style="left:567.5px;top:92px" width="9" height="7" viewBox="0 0 9 7"><path d="M0 0.6H9M0 2.5H9M0 4.4H9M0 6.3H9" stroke="#9a9a9a" stroke-width="0.7"/></svg>
<svg style="left:590.5px;top:91px" width="6.4" height="9" viewBox="0 0 6.4 9"><path d="M0.5 0.5H5.9V8.4L3.2 6.2L0.5 8.4Z" fill="none" stroke="#9a9a9a" stroke-width="0.9"/></svg>
<svg style="left:610.5px;top:91.8px" width="9" height="7.6" viewBox="0 0 9 7.6"><path d="M9 3.8H0.8M3.8 0.6L0.8 3.8L3.8 7" fill="none" stroke="#9a9a9a" stroke-width="0.9"/></svg>
<svg style="left:630.5px;top:91.8px" width="9" height="7.6" viewBox="0 0 9 7.6"><path d="M0 3.8H8.2M5.2 0.6L8.2 3.8L5.2 7" fill="none" stroke="#4c4c4c" stroke-width="0.9"/></svg>
<div class="tc" style="left:656.5px;top:95.39999999999999px;font-size:9.6px;color:#f2b831;font-weight:700;letter-spacing:-0.6px">{<span style="font-size:6px;position:relative;top:-0.4px">..</span>}</div>
<div class="t" style="left:667.5px;top:95.8px;font-size:9.4px;color:#a4a4a4">project.config.json <span style="font-size:8px">&gt;</span> ...</div>
<div class="a" style="left:560px;top:88px;width:340px;height:252px;overflow:hidden">
<div class="a" style="left:51.0px;top:17.2px;width:5.6px;height:14.4px;background:transparent;border:0.7px solid #6a6a5a"></div>
<div class="tr mono" style="left:33.4px;top:24.9px;font-size:7.9px;color:#454545">1</div>
<svg style="left:38.5px;top:20.0px" width="7" height="4.4" viewBox="0 0 7 4.4"><path d="M0.4 0.4L3.5 3.6L6.6 0.4" fill="none" stroke="#c4c4c4" stroke-width="0.9"/></svg>
<div class="t mono" style="left:51.6px;top:25.299999999999997px;font-size:8.4px;letter-spacing:-0.29px;font-weight:700"><span style="color:#e8c84a">{</span></div>
<div class="tr mono" style="left:33.4px;top:42.2px;font-size:7.9px;color:#454545">2</div>
<div class="t mono" style="left:61.1px;top:42.6px;font-size:8.4px;letter-spacing:-0.29px;font-weight:700"><span style="color:#bfd3f2">&quot;appid&quot;</span><span style="color:#d4d4d4">: </span><span style="color:#e5564e">&quot;wxd627bb9c389f5b83&quot;</span><span style="color:#d4d4d4">,</span></div>
<div class="tr mono" style="left:33.4px;top:59.5px;font-size:7.9px;color:#454545">3</div>
<div class="t mono" style="left:61.1px;top:59.9px;font-size:8.4px;letter-spacing:-0.29px;font-weight:700"><span style="color:#bfd3f2">&quot;compileType&quot;</span><span style="color:#d4d4d4">: </span><span style="color:#e5564e">&quot;miniprogram&quot;</span><span style="color:#d4d4d4">,</span></div>
<div class="tr mono" style="left:33.4px;top:76.80000000000001px;font-size:7.9px;color:#454545">4</div>
<svg style="left:38.5px;top:71.9px" width="7" height="4.4" viewBox="0 0 7 4.4"><path d="M0.4 0.4L3.5 3.6L6.6 0.4" fill="none" stroke="#c4c4c4" stroke-width="0.9"/></svg>
<div class="t mono" style="left:61.1px;top:77.20000000000002px;font-size:8.4px;letter-spacing:-0.29px;font-weight:700"><span style="color:#bfd3f2">&quot;packOptions&quot;</span><span style="color:#d4d4d4">: </span><span style="color:#c586c0">{</span></div>
<div class="tr mono" style="left:33.4px;top:94.1px;font-size:7.9px;color:#454545">5</div>
<div class="t mono" style="left:70.6px;top:94.5px;font-size:8.4px;letter-spacing:-0.29px;font-weight:700"><span style="color:#bfd3f2">&quot;ignore&quot;</span><span style="color:#d4d4d4">: </span><span style="color:#6796e6">[]</span><span style="color:#d4d4d4">,</span></div>
<div class="tr mono" style="left:33.4px;top:111.4px;font-size:7.9px;color:#454545">6</div>
<div class="t mono" style="left:70.6px;top:111.80000000000001px;font-size:8.4px;letter-spacing:-0.29px;font-weight:700"><span style="color:#bfd3f2">&quot;include&quot;</span><span style="color:#d4d4d4">: </span><span style="color:#6796e6">[]</span></div>
<div class="tr mono" style="left:33.4px;top:128.70000000000002px;font-size:7.9px;color:#454545">7</div>
<div class="t mono" style="left:61.1px;top:129.10000000000002px;font-size:8.4px;letter-spacing:-0.29px;font-weight:700"><span style="color:#c586c0">}</span><span style="color:#d4d4d4">,</span></div>
<div class="tr mono" style="left:33.4px;top:146.0px;font-size:7.9px;color:#454545">8</div>
<svg style="left:38.5px;top:141.1px" width="7" height="4.4" viewBox="0 0 7 4.4"><path d="M0.4 0.4L3.5 3.6L6.6 0.4" fill="none" stroke="#c4c4c4" stroke-width="0.9"/></svg>
<div class="t mono" style="left:61.1px;top:146.4px;font-size:8.4px;letter-spacing:-0.29px;font-weight:700"><span style="color:#bfd3f2">&quot;setting&quot;</span><span style="color:#d4d4d4">: </span><span style="color:#c586c0">{</span></div>
<div class="tr mono" style="left:33.4px;top:163.3px;font-size:7.9px;color:#454545">9</div>
<div class="t mono" style="left:70.6px;top:163.70000000000002px;font-size:8.4px;letter-spacing:-0.29px;font-weight:700"><span style="color:#bfd3f2">&quot;urlCheck&quot;</span><span style="color:#d4d4d4">: </span><span style="color:#e5564e">false</span><span style="color:#d4d4d4">,</span></div>
<div class="tr mono" style="left:33.4px;top:180.60000000000002px;font-size:7.9px;color:#454545">10</div>
<div class="t mono" style="left:70.6px;top:181.00000000000003px;font-size:8.4px;letter-spacing:-0.29px;font-weight:700"><span style="color:#bfd3f2">&quot;es6&quot;</span><span style="color:#d4d4d4">: </span><span style="color:#e5564e">true</span><span style="color:#d4d4d4">,</span></div>
<div class="tr mono" style="left:33.4px;top:197.9px;font-size:7.9px;color:#454545">11</div>
<div class="t mono" style="left:70.6px;top:198.3px;font-size:8.4px;letter-spacing:-0.29px;font-weight:700"><span style="color:#bfd3f2">&quot;enhance&quot;</span><span style="color:#d4d4d4">: </span><span style="color:#e5564e">true</span><span style="color:#d4d4d4">,</span></div>
<div class="tr mono" style="left:33.4px;top:215.20000000000002px;font-size:7.9px;color:#454545">12</div>
<div class="t mono" style="left:70.6px;top:215.60000000000002px;font-size:8.4px;letter-spacing:-0.29px;font-weight:700"><span style="color:#bfd3f2">&quot;postcss&quot;</span><span style="color:#d4d4d4">: </span><span style="color:#e5564e">true</span><span style="color:#d4d4d4">,</span></div>
<div class="tr mono" style="left:33.4px;top:232.50000000000003px;font-size:7.9px;color:#454545">13</div>
<div class="t mono" style="left:70.6px;top:232.90000000000003px;font-size:8.4px;letter-spacing:-0.29px;font-weight:700"><span style="color:#bfd3f2">&quot;preloadBackgroundData&quot;</span><span style="color:#d4d4d4">: </span><span style="color:#e5564e">false</span><span style="color:#d4d4d4">,</span></div>
<div class="tr mono" style="left:33.4px;top:249.8px;font-size:7.9px;color:#454545">14</div>
<div class="t mono" style="left:70.6px;top:250.20000000000002px;font-size:8.4px;letter-spacing:-0.29px;font-weight:700"><span style="color:#bfd3f2">&quot;minified&quot;</span><span style="color:#d4d4d4">: </span><span style="color:#e5564e">true</span><span style="color:#d4d4d4">,</span></div>
<div class="a" style="left:51.8px;top:33.05px;width:0.7px;height:242.20000000000002px;background:#3a3a3a;"></div>
<div class="a" style="left:61.3px;top:84.95px;width:0.7px;height:34.6px;background:#3c3c3c;"></div>
<div class="a" style="left:61.3px;top:154.15px;width:0.7px;height:121.10000000000001px;background:#3c3c3c;"></div>
<div class="a" style="left:334px;top:17px;width:3.4px;height:3.4px;background:#d8d8d8;"></div>
<div class="a" style="left:334px;top:203.4px;width:3.4px;height:3.4px;background:#d8d8d8;"></div>
</div>
<div class="a" style="left:560.8px;top:339.5px;width:339.2px;height:19.5px;background:#303030;border-top:0.8px solid #3e3e3e"></div>
<div class="t" style="left:575.6px;top:349px;font-size:7.9px;color:#f4f4f4;font-weight:700">调试器</div>
<div class="a" style="left:575.6px;top:357.2px;width:23.6px;height:0.9px;background:#e8e8e8;"></div>
<div class="a" style="left:605px;top:342.6px;width:12.8px;height:12.8px;background:#474747;border-radius:50%"></div>
<div class="tc" style="left:611.4px;top:349.1px;font-size:8px;color:#f4f4f4;font-weight:700">4</div>
<div class="t" style="left:632px;top:349px;font-size:7.9px;color:#a2a2a2">问题</div>
<div class="t" style="left:662.4px;top:349px;font-size:7.9px;color:#a2a2a2">输出</div>
<div class="t" style="left:692.4px;top:349px;font-size:7.9px;color:#a2a2a2">终端</div>
<div class="t" style="left:723px;top:349px;font-size:7.9px;color:#a2a2a2">代码质量</div>
<svg style="left:854px;top:346.5px" width="8" height="5" viewBox="0 0 8 5"><path d="M0.4 4.6L4 0.8L7.6 4.6" fill="none" stroke="#e0e0e0" stroke-width="1"/></svg>
<svg style="left:877px;top:345.6px" width="7" height="7" viewBox="0 0 7 7"><path d="M0.4 0.4L6.6 6.6M6.6 0.4L0.4 6.6" stroke="#e0e0e0" stroke-width="1"/></svg>
<div class="a" style="left:560.8px;top:359px;width:339.2px;height:19px;background:#2a2b2d;"></div>
<div class="a" style="left:560.8px;top:377.6px;width:339.2px;height:0.8px;background:#3a3a3a;"></div>
<svg style="left:568px;top:364.5px" width="11" height="10" viewBox="0 0 11 10"><path d="M4 7.4H0.6V0.6H8.4V3.6" fill="none" stroke="#9aa0a6" stroke-width="0.9" stroke-dasharray="1.6 0.8"/><path d="M4.6 3.8L10 6L7.8 6.8L9.6 9.2L8.6 9.8L7 7.4L5.6 9Z" fill="#9aa0a6"/></svg>
<div class="t" style="left:599px;top:369.3px;color:#e4e6e8;font-size:8.8px;letter-spacing:-0.146px;">Wxml</div>
<div class="t" style="left:637.6px;top:369.3px;color:#e4e6e8;font-size:8.8px;letter-spacing:-0.214px;">Performance</div>
<div class="a" style="left:694px;top:359px;width:47.5px;height:18.6px;background:#000;"></div>
<div class="t" style="left:702.4px;top:369.3px;color:#f4f4f4;font-size:8.8px;letter-spacing:-0.240px;">Console</div>
<div class="tc" style="left:751.5px;top:368.6px;font-size:11px;color:#c0c4c8">»</div>
<svg style="left:796px;top:364.4px" width="9.4" height="8.6" viewBox="0 0 9.4 8.6"><path d="M4.7 0.3L9.2 8.3H0.2Z" fill="#f2c31a"/><path d="M4.7 3V5.6M4.7 6.4V7.2" stroke="#fff7d0" stroke-width="0.9"/></svg>
<div class="tc" style="left:809.2px;top:369.4px;font-size:9.2px;color:#d0d0d0">4</div>
<svg style="left:814.4px;top:365px" width="8" height="7.4" viewBox="0 0 8 7.4"><path d="M0.4 0.4H7.6V5.2H2.4L0.4 7Z" fill="#2f80ed"/></svg>
<div class="tc" style="left:827.6px;top:369.4px;font-size:9.2px;color:#d0d0d0">5</div>
<svg style="left:841.9px;top:363.7px" width="11" height="11" viewBox="-5.5 -5.5 11 11"><g fill="#aab0b6"><rect x="-1.2" y="-5.3" width="2.4" height="3" transform="rotate(0)"/><rect x="-1.2" y="-5.3" width="2.4" height="3" transform="rotate(45)"/><rect x="-1.2" y="-5.3" width="2.4" height="3" transform="rotate(90)"/><rect x="-1.2" y="-5.3" width="2.4" height="3" transform="rotate(135)"/><rect x="-1.2" y="-5.3" width="2.4" height="3" transform="rotate(180)"/><rect x="-1.2" y="-5.3" width="2.4" height="3" transform="rotate(225)"/><rect x="-1.2" y="-5.3" width="2.4" height="3" transform="rotate(270)"/><rect x="-1.2" y="-5.3" width="2.4" height="3" transform="rotate(315)"/></g><circle r="3.2" fill="none" stroke="#aab0b6" stroke-width="1.9"/></svg>
<div class="a" style="left:867.3px;top:365.2px;width:1.6px;height:1.6px;background:#aab0b6;border-radius:50%"></div>
<div class="a" style="left:867.3px;top:368.4px;width:1.6px;height:1.6px;background:#aab0b6;border-radius:50%"></div>
<div class="a" style="left:867.3px;top:371.59999999999997px;width:1.6px;height:1.6px;background:#aab0b6;border-radius:50%"></div>
<svg style="left:882px;top:364px" width="12" height="11" viewBox="0 0 12 11"><path d="M3.4 0.6H11.4V6.8H3.4Z" fill="none" stroke="#9aa0a6" stroke-width="1"/><path d="M2.6 3.4H0.6V10.2H8.8V8" fill="none" stroke="#9aa0a6" stroke-width="1"/></svg>
<div class="a" style="left:560.8px;top:378.4px;width:339.2px;height:18.8px;background:#262729;"></div>
<div class="a" style="left:560.8px;top:396.8px;width:339.2px;height:0.8px;background:#3c3c3c;"></div>
<svg style="left:566.5px;top:383.5px" width="11" height="9" viewBox="0 0 11 9"><rect x="0.5" y="0.5" width="10" height="8" fill="none" stroke="#9aa0a6" stroke-width="0.9"/><path d="M2.6 0.5V8.5" stroke="#9aa0a6" stroke-width="0.9"/><path d="M4.6 2.4L8 4.5L4.6 6.6Z" fill="#9aa0a6"/></svg>
<svg style="left:588px;top:383.3px" width="10" height="10" viewBox="0 0 10 10"><circle cx="5" cy="5" r="4.1" fill="none" stroke="#9aa0a6" stroke-width="1.1"/><path d="M2.2 2.2L7.8 7.8" stroke="#9aa0a6" stroke-width="1.1"/></svg>
<div class="a" style="left:604.6px;top:381.6px;width:0.7px;height:12.6px;background:#3c3c3c;"></div>
<div class="t" style="left:612.4px;top:388.5px;color:#e0e2e4;font-size:8.8px;letter-spacing:-0.176px;">appservice (#3)</div>
<div class="tc" style="left:702.4px;top:388.6px;font-size:6px;color:#9aa0a6">▼</div>
<div class="a" style="left:711.6px;top:381.6px;width:0.7px;height:12.6px;background:#3c3c3c;"></div>
<svg style="left:718.5px;top:384.2px" width="13" height="8.6" viewBox="0 0 13 8.6"><path d="M0.4 4.3C2.4 1.4 4.4 0.4 6.5 0.4S10.6 1.4 12.6 4.3C10.6 7.2 8.6 8.2 6.5 8.2S2.4 7.2 0.4 4.3Z" fill="#9aa0a6"/><circle cx="6.5" cy="4.3" r="2.4" fill="#262729"/><circle cx="6.5" cy="4.3" r="1.2" fill="#9aa0a6"/></svg>
<div class="a" style="left:737.6px;top:381.6px;width:0.7px;height:12.6px;background:#3c3c3c;"></div>
<div class="a" style="left:743.4px;top:381.4px;width:26px;height:13.6px;background:transparent;border:0.8px solid #5a5a5a"></div>
<div class="t" style="left:748px;top:388.6px;color:#d8dadc;font-size:8.8px;letter-spacing:-0.260px;">Filter</div>
<div class="t" style="left:776px;top:388.5px;color:#e0e2e4;font-size:8.8px;letter-spacing:-0.172px;">Default levels</div>
<div class="a" style="left:833.6px;top:381.6px;width:0.7px;height:12.6px;background:#3c3c3c;"></div>
<div class="t" style="left:840.6px;top:388.5px;color:#8e9296;font-size:8.8px;letter-spacing:0.004px;">2 hidden</div>
<svg style="left:882.1px;top:382.9px" width="11" height="11" viewBox="-5.5 -5.5 11 11"><g fill="#aab0b6"><rect x="-1.2" y="-5.3" width="2.4" height="3" transform="rotate(0)"/><rect x="-1.2" y="-5.3" width="2.4" height="3" transform="rotate(45)"/><rect x="-1.2" y="-5.3" width="2.4" height="3" transform="rotate(90)"/><rect x="-1.2" y="-5.3" width="2.4" height="3" transform="rotate(135)"/><rect x="-1.2" y="-5.3" width="2.4" height="3" transform="rotate(180)"/><rect x="-1.2" y="-5.3" width="2.4" height="3" transform="rotate(225)"/><rect x="-1.2" y="-5.3" width="2.4" height="3" transform="rotate(270)"/><rect x="-1.2" y="-5.3" width="2.4" height="3" transform="rotate(315)"/></g><circle r="3.2" fill="none" stroke="#aab0b6" stroke-width="1.9"/></svg>
<div class="a" style="left:560.8px;top:397.6px;width:339.2px;height:302.4px;background:#242424;"></div>
<div class="a" style="left:889.6px;top:397.6px;width:10.4px;height:302.4px;background:#2b2b2b;"></div>
<div class="a" style="left:889.6px;top:484px;width:10.4px;height:200px;background:#4b4b4b;"></div>
<div class="a" style="left:560.8px;top:397.6px;width:328.8px;height:7px;overflow:hidden">
<div class="t mono" style="left:17.200000000000045px;top:1.0px;font-size:8.4px;letter-spacing:-0.29px;font-weight:700;color:#e8e8e8">App Launch</div>
<div class="tr mono" style="left:307.80000000000007px;top:1.0px;font-size:8.4px;letter-spacing:-0.29px;font-weight:700;color:#d0d0d0;text-decoration:underline">main.js? [sm]:146</div>
</div>
<div class="a" style="left:560.8px;top:404px;width:328.8px;height:0.7px;background:#3a3a3a;"></div>
<div class="t mono" style="left:578px;top:412.9px;font-size:8.4px;letter-spacing:-0.29px;font-weight:700;color:#e8e8e8;">App Show</div>
<div class="tr mono" style="left:868.6px;top:412.9px;font-size:8.4px;letter-spacing:-0.29px;font-weight:700;color:#d0d0d0;text-decoration:underline">main.js? [sm]:152</div>
<div class="a" style="left:560.8px;top:418px;width:328.8px;height:45px;background:#332b00;border-top:0.7px solid #514300;border-bottom:0.7px solid #514300"></div>
<svg style="left:565.4px;top:422.0px" width="8" height="7.4" viewBox="0 0 8 7.4"><path d="M4 0.2L7.8 7.2H0.2Z" fill="#f5c518" stroke="#f5c518" stroke-width="0.4" stroke-linejoin="round"/><path d="M4 2.6V4.8M4 5.5V6.3" stroke="#fff6c8" stroke-width="0.9"/></svg>
<div class="t mono" style="left:578px;top:427.2px;font-size:8.4px;letter-spacing:-0.29px;font-weight:700;color:#f5ecd0;">[pages/index/page0] Some selectors are not allowed in</div>
<div class="t mono" style="left:578px;top:437.4px;font-size:8.4px;letter-spacing:-0.29px;font-weight:700;color:#f5ecd0;">component wxss, including tag name selectors, ID selectors,</div>
<div class="t mono" style="left:578px;top:447.59999999999997px;font-size:8.4px;letter-spacing:-0.29px;font-weight:700;color:#f5ecd0;">and attribute selectors.(.<span style="text-decoration:underline">/components/tabbar/tabbar.wxss:3</span></div>
<div class="t mono" style="left:578px;top:457.8px;font-size:8.4px;letter-spacing:-0.29px;font-weight:700;color:#f5ecd0;"><span style="text-decoration:underline">0</span>:15)</div>
<div class="a" style="left:560.8px;top:463px;width:328.8px;height:44.6px;background:#332b00;border-top:0.7px solid #514300;border-bottom:0.7px solid #514300"></div>
<svg style="left:565.4px;top:467.0px" width="8" height="7.4" viewBox="0 0 8 7.4"><path d="M4 0.2L7.8 7.2H0.2Z" fill="#f5c518" stroke="#f5c518" stroke-width="0.4" stroke-linejoin="round"/><path d="M4 2.6V4.8M4 5.5V6.3" stroke="#fff6c8" stroke-width="0.9"/></svg>
<div class="t mono" style="left:578px;top:472.2px;font-size:8.4px;letter-spacing:-0.29px;font-weight:700;color:#f5ecd0;">[pages/index/page0] Some selectors are not allowed in</div>
<div class="t mono" style="left:578px;top:482.4px;font-size:8.4px;letter-spacing:-0.29px;font-weight:700;color:#f5ecd0;">component wxss, including tag name selectors, ID selectors,</div>
<div class="t mono" style="left:578px;top:492.59999999999997px;font-size:8.4px;letter-spacing:-0.29px;font-weight:700;color:#f5ecd0;">and attribute selectors.(.<span style="text-decoration:underline">/components/adList/adList.wxss:2</span></div>
<div class="t mono" style="left:578px;top:502.8px;font-size:8.4px;letter-spacing:-0.29px;font-weight:700;color:#f5ecd0;"><span style="text-decoration:underline">8</span>:44)</div>
<div class="a" style="left:560.8px;top:507.6px;width:328.8px;height:35.1px;background:#332b00;border-top:0.7px solid #514300;border-bottom:0.7px solid #514300"></div>
<svg style="left:565.4px;top:511.59999999999997px" width="8" height="7.4" viewBox="0 0 8 7.4"><path d="M4 0.2L7.8 7.2H0.2Z" fill="#f5c518" stroke="#f5c518" stroke-width="0.4" stroke-linejoin="round"/><path d="M4 2.6V4.8M4 5.5V6.3" stroke="#fff6c8" stroke-width="0.9"/></svg>
<div class="t mono" style="left:578px;top:516.8px;font-size:8.4px;letter-spacing:-0.29px;font-weight:700;color:#f5ecd0;">[pages/index/page0] Some selectors are not allowed in</div>
<div class="t mono" style="left:578px;top:527.0px;font-size:8.4px;letter-spacing:-0.29px;font-weight:700;color:#f5ecd0;">component wxss, including tag name selectors, ID selectors,</div>
<div class="t mono" style="left:578px;top:537.1999999999999px;font-size:8.4px;letter-spacing:-0.29px;font-weight:700;color:#f5ecd0;">and attribute selectors.(.<span style="text-decoration:underline">/components/dream/dream.wxss:78</span>:45)</div>
<div class="t mono" style="left:578px;top:551.3px;font-size:8.4px;letter-spacing:-0.29px;font-weight:700;color:#e8e8e8;">[system] Launch</div>
<div class="t mono" style="left:578px;top:561.5px;font-size:8.4px;letter-spacing:-0.29px;font-weight:700;color:#e8e8e8;">Time: 490 ms</div>
<div class="tr mono" style="left:868.6px;top:551.3px;font-size:8.4px;letter-spacing:-0.29px;font-weight:700;color:#d0d0d0;text-decoration:underline">WAServiceMainContext…96083431&amp;v=2.26.0:1</div>
<div class="a" style="left:560.8px;top:567.4px;width:328.8px;height:0.7px;background:#3a3a3a;"></div>
<svg style="left:580.4px;top:573.5999999999999px" width="3.4" height="4.4" viewBox="0 0 3.4 4.4"><path d="M0 0V4.4L3.4 2.2Z" fill="#8a8a8a"/></svg>
<div class="t mono" style="left:587px;top:576.6999999999999px;font-size:8.4px;letter-spacing:-0.29px;font-weight:700;color:#e0e0e0;font-style:italic">{tabbar_list: Array(2), setting: {…}}</div>
<div class="tr mono" style="left:868.6px;top:576.6999999999999px;font-size:8.4px;letter-spacing:-0.29px;font-weight:700;color:#d0d0d0;text-decoration:underline">vendor.js? [sm]:8205</div>
<div class="t mono" style="left:578px;top:587.1px;font-size:8.4px;letter-spacing:-0.29px;font-weight:700;color:#e0e0e0;">&quot;<span style="color:#f28b54">查询全局配置成功</span>&quot;</div>
<div class="a" style="left:560.8px;top:593px;width:328.8px;height:0.7px;background:#3a3a3a;"></div>
<div class="tr mono" style="left:868.6px;top:601.9px;font-size:8.4px;letter-spacing:-0.29px;font-weight:700;color:#d0d0d0;text-decoration:underline">vendor.js? [sm]:8381</div>
<svg style="left:580.4px;top:609.4px" width="3.4" height="4.4" viewBox="0 0 3.4 4.4"><path d="M0 0V4.4L3.4 2.2Z" fill="#8a8a8a"/></svg>
<div class="t mono" style="left:587px;top:612.5px;font-size:8.4px;letter-spacing:-0.29px;font-weight:700;color:#e0e0e0;font-style:italic">{currendTime: <span style="color:#9980ff">1665996104</span>, nextAdInsertTime: <span style="color:#f28b54">&quot;&quot;</span>} <span style="font-style:normal">&quot;<span style="color:#f28b54">触发插屏广</span></span></div>
<div class="t mono" style="left:578px;top:623.1px;font-size:8.4px;letter-spacing:-0.29px;font-weight:700;color:#e0e0e0;"><span style="color:#f28b54">告</span>&quot;</div>
<div class="a" style="left:560.8px;top:628.6px;width:328.8px;height:0.7px;background:#3a3a3a;"></div>
<div class="tr mono" style="left:868.6px;top:637.6999999999999px;font-size:8.4px;letter-spacing:-0.29px;font-weight:700;color:#d0d0d0;text-decoration:underline">vendor.js? [sm]:8205</div>
<svg style="left:580.4px;top:649.4px" width="3.4" height="4.4" viewBox="0 0 3.4 4.4"><path d="M0 0V4.4L3.4 2.2Z" fill="#8a8a8a"/></svg>
<div class="t mono" style="left:587px;top:647.5px;font-size:8.4px;letter-spacing:-0.29px;font-weight:700;color:#e0e0e0;font-style:italic">{list: Array(16), current_page: <span style="color:#f28b54">&quot;1&quot;</span>, last_page: <span style="color:#9980ff">606</span>, total:</div>
<div class="t mono" style="left:587px;top:657.5px;font-size:8.4px;letter-spacing:-0.29px;font-weight:700;color:#e0e0e0;font-style:italic"><span style="color:#f28b54">&quot;9693&quot;</span>, limit: <span style="color:#f28b54">&quot;16&quot;</span>}</div>
<div class="t mono" style="left:578px;top:667.6999999999999px;font-size:8.4px;letter-spacing:-0.29px;font-weight:700;color:#e0e0e0;">&quot;<span style="color:#f28b54">查询梦码列表成功</span>&quot;</div>
<div class="a" style="left:560.8px;top:672.6px;width:328.8px;height:0.7px;background:#3a3a3a;"></div>
<svg style="left:567px;top:677.4px" width="4" height="6" viewBox="0 0 4 6"><path d="M0.5 0.5L3.4 3L0.5 5.5" fill="none" stroke="#3b82f6" stroke-width="1"/></svg>
<div class="a" style="left:560.8px;top:700px;width:339.2px;height:20px;background:#3a3a3a;"></div>
<div class="t" style="left:730px;top:710.2px;color:#b4b4b4;font-size:8.6px;letter-spacing:0.336px;">行 1, 列 1</div>
<div class="t" style="left:781px;top:710.2px;color:#b4b4b4;font-size:8.6px;letter-spacing:-0.050px;">空格: 2</div>
<div class="t" style="left:818.8px;top:710.2px;color:#b4b4b4;font-size:8.6px;letter-spacing:-0.332px;">UTF-8</div>
<div class="t" style="left:852.8px;top:710.2px;color:#b4b4b4;font-size:8.6px;letter-spacing:-0.416px;">LF</div>
<div class="t" style="left:872.8px;top:710.2px;color:#b4b4b4;font-size:8.6px;letter-spacing:-0.680px;">JSON</div>
</div></body></html>
